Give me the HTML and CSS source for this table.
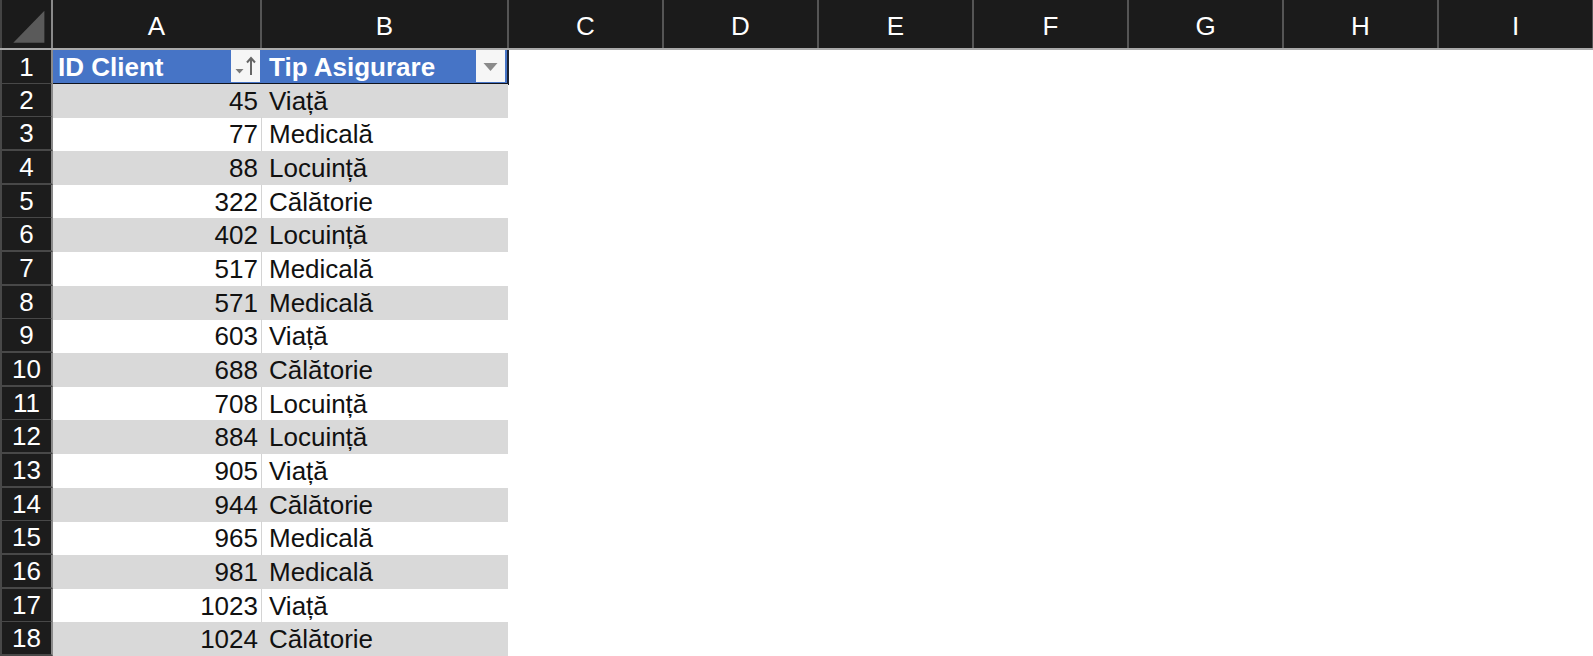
FILE: index.html
```html
<!DOCTYPE html>
<html lang="ro">
<head>
    <meta charset="UTF-8">
    <meta name="viewport" content="width=device-width, initial-scale=1.0">
    <title>Asigurări - Foaie</title>
    <link rel="stylesheet" href="styles.css">
</head>
<body>

    <div class="sheet">
        <div class="colheads">
            <div class="corner">
                <svg width="52" height="48" viewBox="0 0 52 48"><polygon points="12,44 45,44 45,10" fill="#5a5a5a"/></svg>
            </div>
            <div class="colhead">A</div>
            <div class="colhead">B</div>
            <div class="colhead">C</div>
            <div class="colhead">D</div>
            <div class="colhead">E</div>
            <div class="colhead">F</div>
            <div class="colhead">G</div>
            <div class="colhead">H</div>
            <div class="colhead">I</div>
        </div>

        <div class="row head">
            <div class="rownum">1</div>
            <div class="cell th">
                <span>ID Client</span>
                <span class="filter">
                    <svg width="29" height="30" viewBox="0 0 29 30">
                        <polygon points="4.5,18 12.5,18 8.5,22.5" fill="#7a7a7a"/>
                        <path d="M20 24 V7.5 M16 11.5 L20 7 L24 11.5" stroke="#666" stroke-width="2" fill="none"/>
                    </svg>
                </span>
            </div>
            <div class="cell th last">
                <span>Tip Asigurare</span>
                <span class="filter">
                    <svg width="29" height="30" viewBox="0 0 29 30"><polygon points="7.5,12 21.5,12 14.5,20" fill="#8a8a8a"/></svg>
                </span>
            </div>
        </div>

        <div class="row band"><div class="rownum">2</div><div class="cell num">45</div><div class="cell">Viață</div></div>
        <div class="row"><div class="rownum">3</div><div class="cell num">77</div><div class="cell">Medicală</div></div>
        <div class="row band"><div class="rownum">4</div><div class="cell num">88</div><div class="cell">Locuință</div></div>
        <div class="row"><div class="rownum">5</div><div class="cell num">322</div><div class="cell">Călătorie</div></div>
        <div class="row band"><div class="rownum">6</div><div class="cell num">402</div><div class="cell">Locuință</div></div>
        <div class="row"><div class="rownum">7</div><div class="cell num">517</div><div class="cell">Medicală</div></div>
        <div class="row band"><div class="rownum">8</div><div class="cell num">571</div><div class="cell">Medicală</div></div>
        <div class="row"><div class="rownum">9</div><div class="cell num">603</div><div class="cell">Viață</div></div>
        <div class="row band"><div class="rownum">10</div><div class="cell num">688</div><div class="cell">Călătorie</div></div>
        <div class="row"><div class="rownum">11</div><div class="cell num">708</div><div class="cell">Locuință</div></div>
        <div class="row band"><div class="rownum">12</div><div class="cell num">884</div><div class="cell">Locuință</div></div>
        <div class="row"><div class="rownum">13</div><div class="cell num">905</div><div class="cell">Viață</div></div>
        <div class="row band"><div class="rownum">14</div><div class="cell num">944</div><div class="cell">Călătorie</div></div>
        <div class="row"><div class="rownum">15</div><div class="cell num">965</div><div class="cell">Medicală</div></div>
        <div class="row band"><div class="rownum">16</div><div class="cell num">981</div><div class="cell">Medicală</div></div>
        <div class="row"><div class="rownum">17</div><div class="cell num">1023</div><div class="cell">Viață</div></div>
        <div class="row band"><div class="rownum">18</div><div class="cell num">1024</div><div class="cell">Călătorie</div></div>
    </div>

</body>
</html>
```

FILE: styles.css
```css
* {
    box-sizing: border-box;
}
body {
    margin: 0;
    background-color: #fff;
    font-family: "Liberation Sans", Arial, sans-serif;
    overflow: hidden;
}
.sheet {
    display: flex;
    flex-direction: column;
    width: 1593px;
    height: 656px;
    overflow: hidden;
}
.colheads {
    display: grid;
    grid-template-columns: 53px 209px 247px repeat(7, 155px);
    height: 50px;
    background-color: #1b1b1b;
    border-bottom: 2px solid #a9a9a9;
}
.corner {
    border-left: 2px solid #444;
    border-right: 2px solid #8a8a8a;
    display: flex;
    align-items: flex-end;
}
.corner svg {
    display: block;
}
.colhead {
    display: flex;
    align-items: center;
    justify-content: center;
    padding-top: 4px;
    color: #fff;
    font-size: 26px;
    border-right: 2px solid #555;
}
.row {
    display: grid;
    grid-template-columns: 53px 209px 247px;
    height: 33.67px;
    flex-shrink: 0;
}
.rownum {
    display: flex;
    align-items: center;
    justify-content: center;
    padding-top: 1px;
    background-color: #1c1c1c;
    color: #fff;
    font-size: 26px;
    border-left: 2px solid #484848;
    border-bottom: 2px solid #484848;
    border-right: 2px solid #8a8a8a;
}
.cell {
    display: flex;
    align-items: center;
    padding: 1px 3px 0 7px;
    font-size: 26px;
    color: #111;
}
.cell.num {
    justify-content: flex-end;
    border-right: 1px solid #d4d4d4;
}
.band .cell {
    background-color: #d9d9d9;
    border-right-color: #d9d9d9;
}
.band .cell:last-child {
    margin-right: 1px;
}
.th {
    justify-content: space-between;
    align-items: stretch;
    padding: 0 2px 0 5px;
    background-color: #4674c6;
    color: #fff;
    font-weight: bold;
    font-size: 26px;
    border-bottom: 2px solid #10131c;
}
.th span:first-child {
    display: flex;
    align-items: center;
    padding-top: 2px;
}
.th.last {
    padding-left: 7px;
    border-right: 2px solid #1a2233;
}
.filter {
    width: 29px;
    margin-bottom: 1px;
    background-color: #f6f6f6;
    display: flex;
    align-items: center;
}
.filter svg {
    display: block;
}
```
